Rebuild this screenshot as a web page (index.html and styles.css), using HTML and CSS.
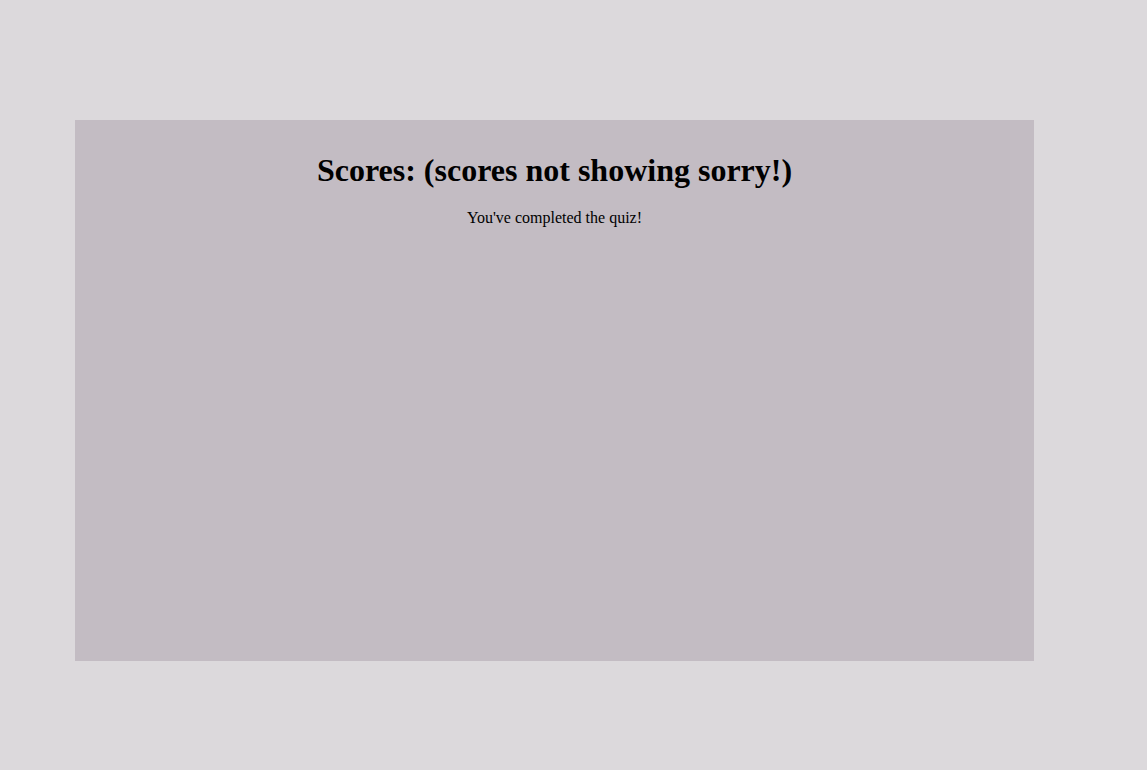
FILE: index.html
```html
<!DOCTYPE html>
<html>
<head>
<meta charset="utf-8">
<link rel="stylesheet" href="styles.css">
</head>
<body>
<div class="panel">
  <h1 class="title">Scores: (scores not showing sorry!)</h1>
  <p class="msg">You've completed the quiz!</p>
</div>
</body>
</html>
```
FILE: styles.css
```css
html, body {
  margin: 0;
  padding: 0;
}
body {
  background: #dcd9dc;
  font-family: "Liberation Serif", "Times New Roman", serif;
  color: #000;
  padding-top: 120px;
}
.panel {
  margin-left: 75px;
  width: 959px;
  height: 541px;
  box-sizing: border-box;
  padding-top: 11px;
  background: #c3bcc3;
  text-align: center;
}
.title {
  font-size: 32px;
  font-weight: bold;
  margin: 21px 0 20px;
}
.msg {
  font-size: 16px;
  margin: 16px 0;
}
```
